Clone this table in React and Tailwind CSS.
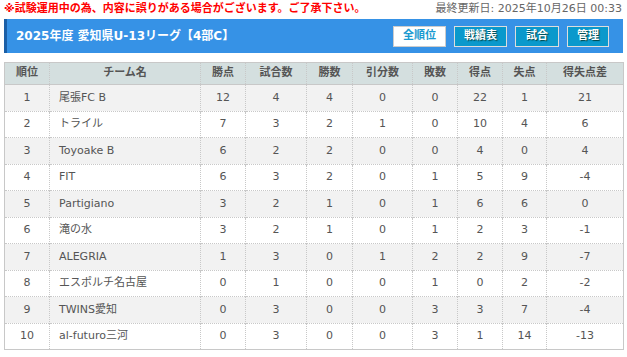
import React from "react";

const rows = [
  [1, "尾張FC B", 12, 4, 4, 0, 0, 22, 1, 21],
  [2, "トライル", 7, 3, 2, 1, 0, 10, 4, 6],
  [3, "Toyoake B", 6, 2, 2, 0, 0, 4, 0, 4],
  [4, "FIT", 6, 3, 2, 0, 1, 5, 9, -4],
  [5, "Partigiano", 3, 2, 1, 0, 1, 6, 6, 0],
  [6, "滝の水", 3, 2, 1, 0, 1, 2, 3, -1],
  [7, "ALEGRIA", 1, 3, 0, 1, 2, 2, 9, -7],
  [8, "エスポルチ名古屋", 0, 1, 0, 0, 1, 0, 2, -2],
  [9, "TWINS愛知", 0, 3, 0, 0, 3, 3, 7, -4],
  [10, "al-futuro三河", 0, 3, 0, 0, 3, 1, 14, -13],
];

const heads = ["順位", "チーム名", "勝点", "試合数", "勝数", "引分数", "敗数", "得点", "失点", "得失点差"];
const widths = [45, 151, 45, 61, 46, 60, 45, 45, 44, 77];

export default function App() {
  return (
    <div
      className="w-[627px] h-[357px] bg-white text-[11px] text-[#555]"
      style={{ fontFamily: '"DejaVu Sans", "Noto Sans CJK JP", sans-serif' }}
    >
      <div className="flex justify-between items-center h-[19px] px-[4px]">
        <span className="text-[#f00] font-bold">※試験運用中の為、内容に誤りがある場合がございます。ご了承下さい。</span>
        <span className="text-[#666] pr-[1px]">最終更新日: 2025年10月26日 00:33</span>
      </div>
      <div className="mx-[4px] w-[619px] h-[34px] bg-[#3692e6] border-l-[3px] border-[#1b5fa6] flex items-center justify-between pl-[9px] pr-[14px]">
        <span className="text-white font-bold text-[12px]">2025年度 愛知県U-13リーグ【4部C】</span>
        <div className="flex gap-[8px]">
          <span className="h-[21px] px-[9px] flex items-center bg-white border border-[#ccc] text-[#1a9ad0] font-bold">全順位</span>
          <span className="h-[21px] px-[9px] flex items-center bg-[#0a99cc] border border-[#ddd] text-white font-bold [text-shadow:1px_1px_1px_#044]">戦績表</span>
          <span className="h-[21px] px-[10px] flex items-center bg-[#0a99cc] border border-[#ddd] text-white font-bold [text-shadow:1px_1px_1px_#044]">試合</span>
          <span className="h-[21px] px-[9px] flex items-center bg-[#0a99cc] border border-[#ddd] text-white font-bold [text-shadow:1px_1px_1px_#044]">管理</span>
        </div>
      </div>
      <table className="mt-[9px] ml-[4px] w-[619px] border-collapse table-fixed border border-[#c8c8c8]">
        <colgroup>
          {widths.map((w, i) => (
            <col key={i} style={{ width: w }} />
          ))}
        </colgroup>
        <thead>
          <tr className="h-[22px] bg-[#d4dfdf] border-b border-[#c8c8c8]">
            {heads.map((h, i) => (
              <th key={i} className="font-bold text-[#555] text-center border-l border-dotted border-[#c8c8c8] p-0 first:border-l-0">
                {h}
              </th>
            ))}
          </tr>
        </thead>
        <tbody>
          {rows.map((r, ri) => (
            <tr key={ri} className={`h-[26.5px] border-t border-dotted border-[#c8c8c8] ${ri % 2 === 0 ? "bg-[#f2f2f2]" : "bg-white"}`}>
              {r.map((c, ci) => (
                <td
                  key={ci}
                  className={`p-0 border-l border-dotted border-[#c8c8c8] first:border-l-0 ${ci === 1 ? "text-left pl-[9px]" : "text-center"}`}
                >
                  {c}
                </td>
              ))}
            </tr>
          ))}
        </tbody>
      </table>
    </div>
  );
}
